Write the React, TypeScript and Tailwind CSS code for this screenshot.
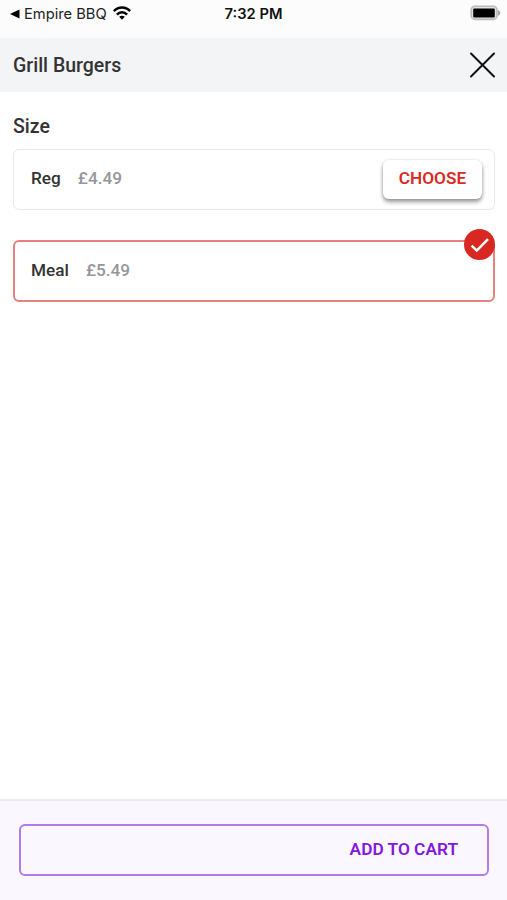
interface SizeOption {
  id: string;
  name: string;
  price: string;
}

const SIZES: SizeOption[] = [
  { id: 'reg', name: 'Reg', price: '£4.49' },
  { id: 'meal', name: 'Meal', price: '£5.49' },
];

function StatusBar() {
  return (
    <div className="relative flex h-[38px] shrink-0 items-start bg-[#fcfcfc] font-['Inter',sans-serif] text-black">
      <div className="flex h-7 items-center pl-[10px]">
        <svg width="10" height="10" viewBox="0 0 10 10">
          <path d="M0 5 L9.5 0.6 V9.4 Z" fill="#000" />
        </svg>
        <span className="ml-1 w-[84px] pt-[1px] text-[14.7px] whitespace-nowrap text-[#222]">Empire BBQ</span>
        <svg className="ml-[5px] -mt-[2px]" width="18" height="14" viewBox="0 0 18 14" fill="none" stroke="#000" strokeWidth="2.5">
          <path d="M0.9 5.2 C5.4 0.3 12.6 0.3 17.1 5.2" />
          <path d="M3.9 8.6 C6.8 5.4 11.2 5.4 14.1 8.6" />
          <path d="M9 13.8 L6.2 10.8 C7.8 9.3 10.2 9.3 11.8 10.8 Z" fill="#000" stroke="none" />
        </svg>
      </div>
      <div className="absolute inset-x-0 top-0 flex h-[29px] items-center justify-center text-[14.7px] font-semibold text-[#111]">7:32 PM</div>
      <div className="ml-auto flex h-[26px] items-center pr-[6px]">
        <svg width="31" height="16" viewBox="0 0 31 16">
          <rect x="1.2" y="1.2" width="25.8" height="13.2" rx="4" fill="#e4e4e4" stroke="#bababa" strokeWidth="1.6" />
          <rect x="3.2" y="3.5" width="21.6" height="9" rx="1" fill="#000" />
          <path d="M28 5.2 C31 6.4 31 9.6 28 10.8 Z" fill="#aaa" />
        </svg>
      </div>
    </div>
  );
}

function SizeRow({ option, selected }: { option: SizeOption; selected: boolean }) {
  return (
    <div
      className={`relative flex items-center rounded-[6px] bg-white text-[17.2px] font-medium ${
        selected ? 'h-[62px] border-2 border-[#e5827d] pl-4' : 'h-[61px] border border-[#e9e9e9] pb-[1px] pl-[17px]'
      }`}
    >
      <span className="text-[#333]">{option.name}</span>
      <span className="ml-[17px] text-[#94979b]">{option.price}</span>
      {selected ? (
        <div className="absolute -top-[13px] -right-[2px] flex size-[31px] items-center justify-center rounded-full bg-[#d92822]">
          <svg width="20" height="16" viewBox="0 0 20 16" fill="none" stroke="#fff" strokeWidth="2.5">
            <path d="M1.6 8.6 L6.8 13.6 L18 2.2" />
          </svg>
        </div>
      ) : (
        <button className="mr-3 ml-auto h-[39px] w-[99px] rounded-[6px] bg-white pb-[1px] text-[17.2px] font-semibold text-[#d92b25] shadow-[0_3px_4px_rgba(0,0,0,0.4),0_0_3px_rgba(0,0,0,0.12)]">
          CHOOSE
        </button>
      )}
    </div>
  );
}

export default function App() {
  const selectedId = 'meal';

  return (
    <div className="flex h-[900px] w-full flex-col overflow-hidden bg-white font-['Roboto',sans-serif]">
      <StatusBar />

      <header className="flex h-[54px] shrink-0 items-center justify-between bg-[#f2f4f6] pr-[11px] pl-[13px]">
        <h1 className="pt-[1px] text-[19.5px] font-medium text-[#333]">Grill Burgers</h1>
        <button aria-label="Close">
          <svg width="27" height="27" viewBox="0 0 27 27" stroke="#111" strokeWidth="2" strokeLinecap="round">
            <path d="M2 1.5 L25 24.5 M25 1.5 L2 24.5" />
          </svg>
        </button>
      </header>

      <main className="flex-1 pt-[21px] pr-3 pl-[13px]">
        <h2 className="text-[19.5px] leading-7 font-medium text-[#333]">Size</h2>
        <div className="mt-2 flex flex-col gap-[30px]">
          {SIZES.map((option) => (
            <SizeRow key={option.id} option={option} selected={option.id === selectedId} />
          ))}
        </div>
      </main>

      <footer className="h-[101px] shrink-0 border-t-2 border-[#ecebf0] bg-[#faf7ff] pt-[23px] pr-[18px] pl-[19px]">
        <button className="flex h-[52px] w-full items-center justify-end rounded-[6px] border-2 border-[#b27be9] pr-[29px] pb-[1px] text-[17.3px] font-semibold text-[#8218dc]">
          ADD TO CART
        </button>
      </footer>
    </div>
  );
}
